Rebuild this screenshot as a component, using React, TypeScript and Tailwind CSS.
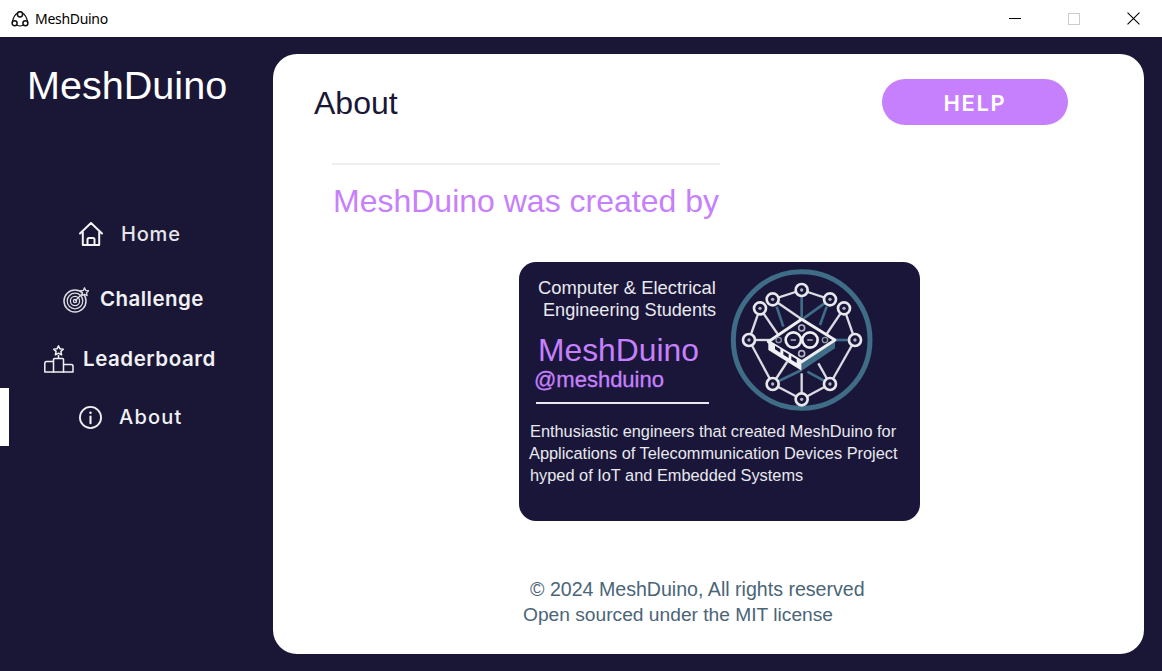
const navFont = "font-['Inter',sans-serif]";

function Logo() {
  const n: [number, number][] = [[245,90],[158,118],[330,118],[120,145],[372,145],[87,240],[405,240],[158,372],[330,372],[245,418]];
  const white: [number, number, number, number][] = [
    [245,90,158,118],[245,90,330,118],[120,145,87,240],[372,145,405,240],
    [87,240,150,240],[87,240,158,372],[405,240,330,372],[158,372,245,418],[330,372,245,418],
    [158,118,245,178],[120,145,175,225],[372,145,318,225],
    [158,372,205,300],[330,372,295,310],[245,340,245,418],
  ];
  const teal: [number, number, number, number][] = [
    [170,140,190,200],[320,140,300,195],[245,90,245,172],[330,118,250,176],[158,372,245,330],[330,372,262,335],[345,240,405,240],
  ];
  return (
    <svg viewBox="0 0 170 160" className="w-[170px] h-[160px] shrink-0">
      <g transform="scale(0.3333)">
        <circle cx="245" cy="240" r="205" fill="none" stroke="#3f6c86" strokeWidth="15" />
        {teal.map((l, i) => <line key={i} x1={l[0]} y1={l[1]} x2={l[2]} y2={l[3]} stroke="#3f6c86" strokeWidth="8" />)}
        {white.map((l, i) => <line key={i} x1={l[0]} y1={l[1]} x2={l[2]} y2={l[3]} stroke="#d9dde3" strokeWidth="7" />)}
        {n.map((p, i) => (
          <g key={i}>
            <circle cx={p[0]} cy={p[1]} r="18" fill="#19163a" stroke="#e6e8ec" strokeWidth="8" />
            <circle cx={p[0]} cy={p[1]} r="5" fill="#aeb5c0" />
          </g>
        ))}
        <path d="M145 245 L145 270 L245 332 L345 265 L345 240 Z" fill="#19163a" />
        <path d="M145 245 L145 270 L245 332 L245 305 Z" fill="#f0f1f4" />
        <path d="M245 305 L245 332 L345 265 L345 240 Z" fill="#3f6c86" />
        <path d="M245 178 L345 240 L245 305 L145 245 Z" fill="#19163a" stroke="#eceef1" strokeWidth="9" strokeLinejoin="round" />
        <path d="M165 268 l16 10 v-11 l-16 -10 Z M190 284 l16 10 v-11 l-16 -10 Z M214 299 l16 10 v-11 l-16 -10 Z" fill="#19163a" />
        <circle cx="220" cy="240" r="23" fill="none" stroke="#eceef1" strokeWidth="8" />
        <circle cx="270" cy="240" r="23" fill="none" stroke="#eceef1" strokeWidth="8" />
        <path d="M212 240 h16 M262 240 h16" stroke="#aeb5c0" strokeWidth="4" />
        <circle cx="245" cy="204" r="9" fill="none" stroke="#aeb5c0" strokeWidth="5" />
        <circle cx="245" cy="281" r="9" fill="none" stroke="#aeb5c0" strokeWidth="5" />
        <circle cx="176" cy="240" r="8" fill="none" stroke="#8f97a3" strokeWidth="4" />
        <circle cx="315" cy="240" r="8" fill="none" stroke="#8f97a3" strokeWidth="4" />
      </g>
    </svg>
  );
}

function HomeIcon() {
  return (
    <svg viewBox="0 0 24 24" className="w-[24px] h-[24px]" fill="none" stroke="#f4f4f6" strokeWidth="2" strokeLinejoin="round" strokeLinecap="round">
      <path d="M1 11.5 L12 1 L23 11.5 M3.8 10 V23 H20.2 V10 M8.5 23 V17.5 Q8.5 16 10 16 H14 Q15.5 16 15.5 17.5 V23" />
    </svg>
  );
}
function TargetIcon() {
  return (
    <svg viewBox="0 0 26 26" className="w-[26px] h-[26px]" fill="none" stroke="#dcdce2" strokeWidth="1.3" strokeLinejoin="round">
      <circle cx="12" cy="14" r="11" strokeWidth="1.5" />
      <circle cx="12" cy="14" r="7.8" />
      <circle cx="12" cy="14" r="4.6" />
      <circle cx="12" cy="14" r="1.6" />
      <path d="M12 14 L19 7" />
      <path d="M21.5 0.8 L22.7 3.4 L25.6 3.7 L23.5 5.7 L24.1 8.6 L21.5 7.2 L18.9 8.6 L19.5 5.7 L17.4 3.7 L20.3 3.4 Z" fill="#1a1736" />
    </svg>
  );
}
function PodiumIcon() {
  return (
    <svg viewBox="0 0 30 28" className="w-[30px] h-[28px]" fill="none" stroke="#f1f1f4" strokeWidth="1.5" strokeLinejoin="round" strokeLinecap="round">
      <path d="M14.5 0.8 L16 3.8 L19.3 4.2 L16.9 6.4 L17.6 9.8 L14.5 8.2 L11.4 9.8 L12.1 6.4 L9.7 4.2 L13 3.8 Z" />
      <path d="M14.5 10.5 V13" />
      <path d="M9.5 27 V14.5 Q9.5 13.5 10.5 13.5 H18.5 Q19.5 13.5 19.5 14.5 V27 Z" />
      <path d="M9.5 16.5 H2.5 Q0.8 16.5 0.8 18.2 V27 H9.5 M19.5 19.5 H27 Q29 19.5 29 21.2 V27 H19.5" />
    </svg>
  );
}
function InfoIcon() {
  return (
    <svg viewBox="0 0 26 26" className="w-[25px] h-[25px]" fill="none" stroke="#f1f1f4" strokeWidth="1.9" strokeLinecap="round">
      <circle cx="13" cy="13" r="11" />
      <path d="M13 12 V19" strokeWidth="2.2" />
      <circle cx="13" cy="8" r="1.3" fill="#f1f1f4" stroke="none" />
    </svg>
  );
}

function AppIcon() {
  return (
    <svg viewBox="0 0 18 16" className="w-[18px] h-[16px]" fill="none" stroke="#111" strokeWidth="1.2">
      <path d="M1.2 11.5 C2 7.5 4 3.5 6.5 2 M11.5 2 C14 3.5 16 7.5 16.8 11.5 M6 14.3 C7.5 15 10.5 15 12 14.3" />
      <circle cx="9" cy="3.3" r="2.6" fill="#fff" strokeWidth="1.5" />
      <circle cx="3.6" cy="12.3" r="2.5" fill="#fff" strokeWidth="1.5" />
      <circle cx="14.4" cy="12.3" r="2.5" fill="#fff" strokeWidth="1.5" />
    </svg>
  );
}

export default function App() {
  return (
    <div className="w-[1162px] h-[671px] flex flex-col overflow-hidden bg-[#1a1736] font-['Liberation_Sans',sans-serif]">
      <div className="h-[37px] bg-white flex items-center shrink-0">
        <div className="ml-[11px] flex items-center gap-[6px]">
          <AppIcon />
          <span className="text-[14px] text-black font-['Noto_Sans',sans-serif] tracking-[-0.3px]">MeshDuino</span>
        </div>
        <div className="ml-auto flex items-center h-full">
          <div className="w-[58px] flex justify-center"><div className="w-[12px] h-px bg-black" /></div>
          <div className="w-[60px] flex justify-center"><div className="w-[12px] h-[12px] border border-[#cccccc]" /></div>
          <div className="w-[58px] flex justify-center">
            <svg viewBox="0 0 12 12" className="w-[13px] h-[13px]" stroke="#000" strokeWidth="1"><path d="M0.5 0.5 L11.5 11.5 M11.5 0.5 L0.5 11.5" /></svg>
          </div>
        </div>
      </div>

      <div className="flex-1 flex min-h-0">
        <aside className="w-[273px] shrink-0 flex flex-col">
          <div className="text-[39.6px] leading-[46px] text-white mt-[25px] ml-[27px]">MeshDuino</div>
          <nav className={`mt-[96px] flex flex-col text-[#f1f1f4] ${navFont}`}>
            <div className="h-[60px] flex items-center pl-[79px] gap-[18px] text-[20px] font-medium tracking-[0.8px] text-[#e6e6ea]">
              <HomeIcon /><span>Home</span>
            </div>
            <div className="h-[60px] flex items-center pl-[63px] gap-[11px] text-[20.5px] font-semibold tracking-[0.45px] pt-[11px]">
              <TargetIcon /><span>Challenge</span>
            </div>
            <div className="h-[64px] flex items-center pl-[44px] gap-[9px] text-[20.5px] font-semibold tracking-[0.55px] pt-[6px]">
              <PodiumIcon /><span>Leaderboard</span>
            </div>
            <div className="h-[58px] flex items-center pl-[78px] gap-[16px] text-[20px] font-medium tracking-[1.2px] relative">
              <div className="absolute left-0 top-0 w-[9px] h-[58px] bg-white" />
              <InfoIcon /><span>About</span>
            </div>
          </nav>
        </aside>

        <main className="mt-[17px] mb-[17px] w-[871px] bg-white rounded-[24px] flex flex-col text-[#1a1736]">
          <div className="flex items-start mt-[26px] relative">
            <h1 className="ml-[41px] text-[32px] leading-[46px]">About</h1>
            <div className={`absolute left-[609px] -top-[1px] w-[186px] h-[46px] rounded-[23px] bg-[#c780fd] flex items-center justify-center pt-[3px] text-white text-[22px] font-semibold tracking-[1.6px] ${navFont}`}>HELP</div>
          </div>
          <div className="mt-[37px] ml-[59px] w-[388px] h-[2px] bg-[#eeeeef]" />
          <div className="mt-[16px] ml-[60px] text-[32px] leading-[40px] text-[#c780fd]">MeshDuino was created by</div>

          <div className="ml-[246px] mt-[41px] w-[401px] h-[259px] rounded-[17px] bg-[#19163a] flex flex-col">
            <div className="flex">
              <div className="w-[201px] shrink-0">
                <div className="mt-[15px] ml-[19px] text-[18.4px] leading-[22px] text-[#e9e9ee] whitespace-nowrap">Computer &amp; Electrical</div>
                <div className="ml-[24px] text-[18.1px] leading-[22px] text-[#e9e9ee] whitespace-nowrap">Engineering Students</div>
                <div className="mt-[11px] ml-[19px] text-[31.8px] leading-[36px] text-[#c780fd]">MeshDuino</div>
                <div className="ml-[15px] -mt-[1px] text-[22px] leading-[26px] text-[#c780fd] [-webkit-text-stroke:0.3px_#c780fd]">@meshduino</div>
                <div className="mt-[9px] ml-[17px] w-[173px] h-[2px] bg-[#e9e9ee]" />
              </div>
              <div className="-mt-[2px] h-[158px]"><Logo /></div>
            </div>
            <div className="mt-[2px] text-[16.35px] leading-[22px] text-[#e9e9ee] whitespace-nowrap">
              <div className="ml-[11px]">Enthusiastic engineers that created MeshDuino for</div>
              <div className="ml-[10px]">Applications of Telecommunication Devices Project</div>
              <div className="ml-[11px]">hyped of IoT and Embedded Systems</div>
            </div>
          </div>

          <div className="mt-[56px] leading-[25px] text-[#4a6578] whitespace-nowrap">
            <div className="ml-[257px] text-[19.6px]">© 2024 MeshDuino, All rights reserved</div>
            <div className="ml-[250px] text-[19.2px]">Open sourced under the MIT license</div>
          </div>
        </main>
      </div>
    </div>
  );
}
